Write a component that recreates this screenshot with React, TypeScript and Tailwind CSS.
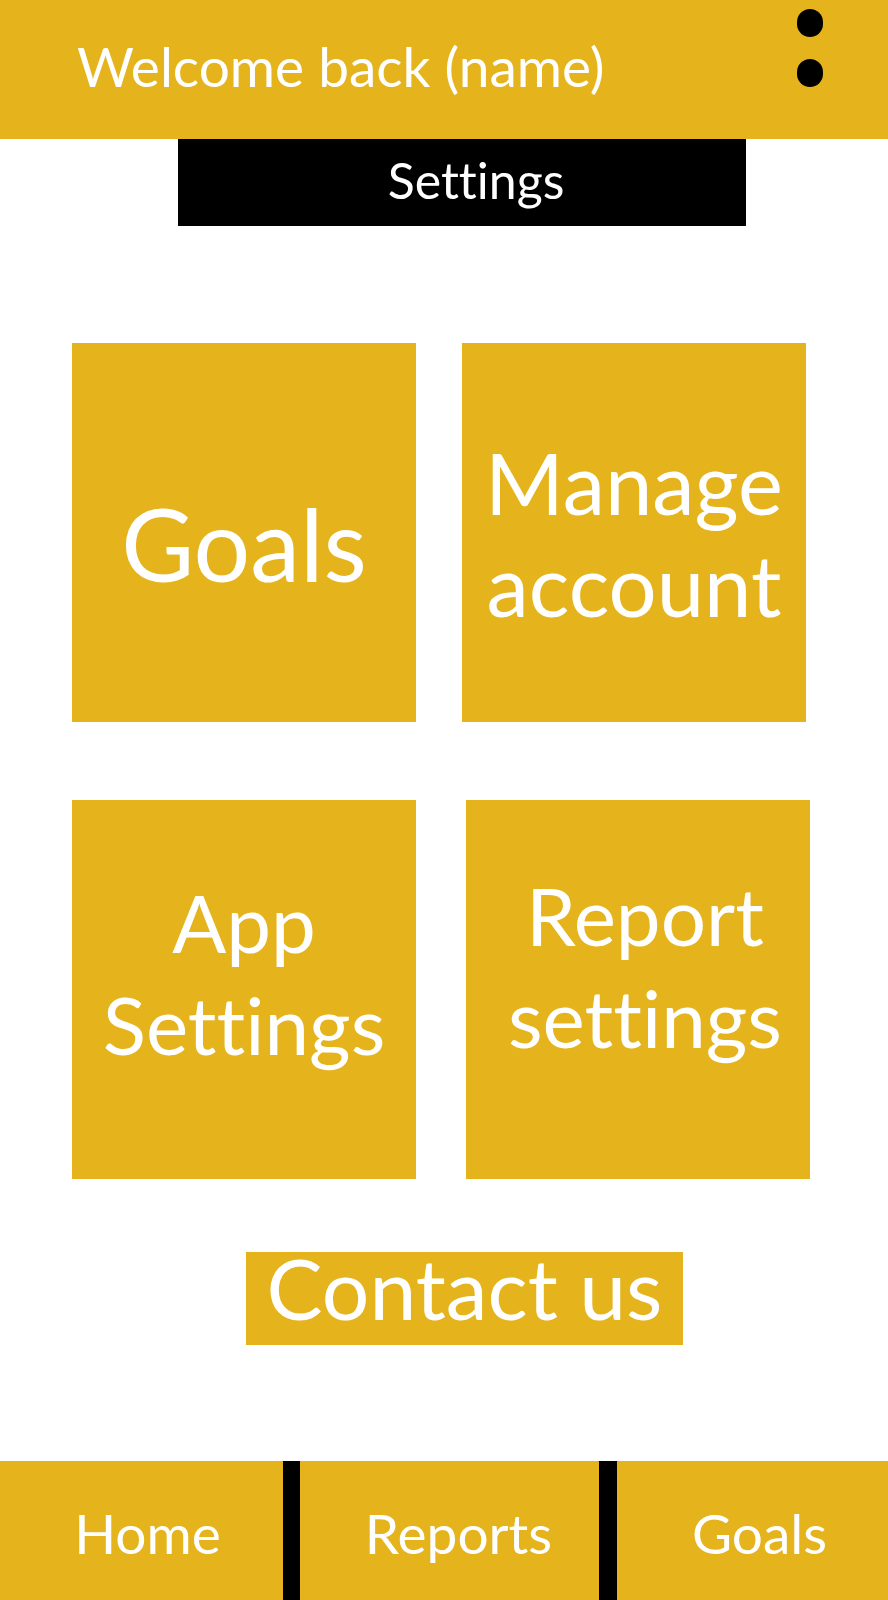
import React from "react";

const font = { fontFamily: "Lato, 'Open Sans', sans-serif" };

const Tile: React.FC<{ lines: string[]; size: string; className?: string }> = ({ lines, size, className }) => (
  <div className={`bg-[#e5b31b] h-[379px] w-[344px] flex flex-col items-center justify-center text-white ${className ?? ""}`}>
    {lines.map((l) => (
      <span key={l} className={size}>
        {l}
      </span>
    ))}
  </div>
);

export default function App() {
  return (
    <div
      className="w-[888px] h-[1600px] bg-white flex flex-col overflow-hidden [font-variant-ligatures:none]"
      style={font}
    >
      {/* header */}
      <div className="h-[139px] bg-[#e5b31b] flex justify-between items-center pl-[77px] pr-[65px] shrink-0">
        <span className="text-white text-[55px] leading-none pb-[6px]">Welcome back (name)</span>
        <div className="flex flex-col gap-[22px] self-start pt-[9px]">
          <span className="block w-[26px] h-[28px] rounded-full bg-black" />
          <span className="block w-[26px] h-[28px] rounded-full bg-black" />
        </div>
      </div>

      {/* section title */}
      <div className="ml-[178px] w-[568px] h-[87px] bg-black flex items-center justify-center pl-[28px] shrink-0">
        <span className="text-white text-[50px] leading-none pb-[6px]">Settings</span>
      </div>

      {/* tiles */}
      <div className="flex flex-col gap-[78px] pl-[72px] mt-[117px]">
        <div className="flex gap-[46px]">
          <Tile lines={["Goals"]} size="text-[100px] leading-[110px]" className="pt-[20px]" />
          <Tile lines={["Manage", "account"]} size="text-[85px] leading-[102px]" />
        </div>
        <div className="flex gap-[50px]">
          <Tile lines={["App", "Settings"]} size="text-[80px] leading-[102px]" className="pb-[34px]" />
          <Tile lines={["Report", "settings"]} size="text-[80px] leading-[102px]" className="pb-[48px] pl-[14px]" />
        </div>
      </div>

      <div className="ml-[246px] w-[437px] h-[93px] bg-[#e5b31b] mt-[73px] flex justify-center">
        <span className="text-white text-[84px] leading-[72px]">Contact us</span>
      </div>

      {/* bottom nav */}
      <div className="mt-auto h-[139px] bg-[#e5b31b] flex text-white text-[55px]">
        <div className="w-[283px] flex items-center justify-center pl-[12px] pt-[6px]">Home</div>
        <div className="w-[17px] bg-black" />
        <div className="w-[299px] flex items-center justify-center pl-[18px] pt-[6px]">Reports</div>
        <div className="w-[18px] bg-black" />
        <div className="flex-1 flex items-center justify-center pl-[14px] pt-[6px]">Goals</div>
      </div>
    </div>
  );
}
